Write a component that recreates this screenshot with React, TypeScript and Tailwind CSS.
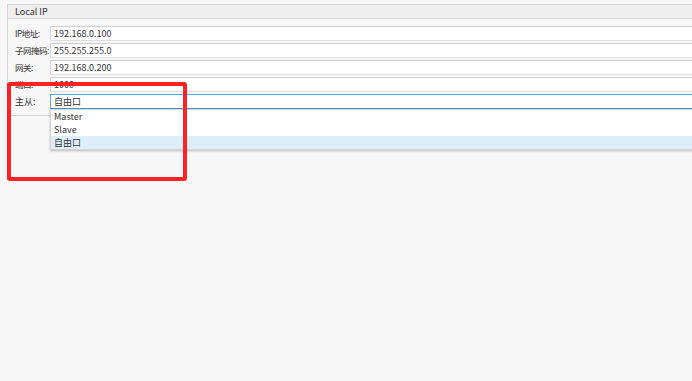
import React from 'react';

const rows = [
    { label: 'IP地址:', value: '192.168.0.100' },
    { label: '子网掩码:', value: '255.255.255.0' },
    { label: '网关:', value: '192.168.0.200' },
    { label: '端口:', value: '1000' },
];

const options = ['Master', 'Slave', '自由口'];

const App: React.FC = () => {
    return (
        <div
            className="relative w-[692px] h-[381px] overflow-hidden bg-[#f7f7f7] text-[9px] text-[#333]"
            style={{ fontFamily: '"Noto Sans CJK SC", "Noto Sans", sans-serif' }}
        >
            <div className="ml-[7px] mt-[4px] h-[112px] border border-r-0 border-[#d2d2d2] bg-[#f7f7f7]">
                <div className="h-[14px] bg-[#efefef] border-b border-[#d6d6d6] pl-[7px] leading-[13px] text-[#333]">
                    Local IP
                </div>
                <div className="flex flex-col gap-[2px] pt-[7px]">
                    {rows.map((row) => (
                        <div key={row.label} className="flex items-center h-[15px]">
                            <div className="w-[42px] shrink-0 pl-[7px] whitespace-nowrap text-[8.5px] tracking-[-0.5px]">{row.label}</div>
                            <div className="flex-1 h-[15px] bg-white border-t border-b border-t-[#cfcfcf] border-b-[#dedede] border-l border-l-[#d8d8d8] pl-[3px] leading-[13px] text-[#333]">
                                {row.value}
                            </div>
                        </div>
                    ))}
                    <div className="flex items-center h-[15px]">
                        <div className="w-[42px] shrink-0 pl-[7px] whitespace-nowrap">主从:</div>
                        <div className="flex-1 h-[15px] bg-white border-t border-b border-l border-t-[#5ea9e2] border-b-[#5b8fbf] border-l-[#5ea9e2] pl-[3px] leading-[13px]">
                            自由口
                        </div>
                    </div>
                </div>
            </div>

            <div className="absolute left-[50px] top-[109px] w-[660px] bg-white border border-[#d4d4d4] shadow-[0_1px_2px_rgba(0,0,0,0.25)]">
                {options.map((opt) => (
                    <div
                        key={opt}
                        className={
                            opt === '自由口'
                                ? 'h-[13px] leading-[13px] pl-[3px] bg-[#ddeef9] text-[#333]'
                                : 'h-[13px] leading-[13px] pl-[3px] text-[#333]'
                        }
                    >
                        {opt}
                    </div>
                ))}
            </div>

            <div className="absolute left-[7px] top-[82px] w-[180px] h-[99px] border-[4px] border-[#ff2222] rounded-[3px]" />
        </div>
    );
};

export default App;
